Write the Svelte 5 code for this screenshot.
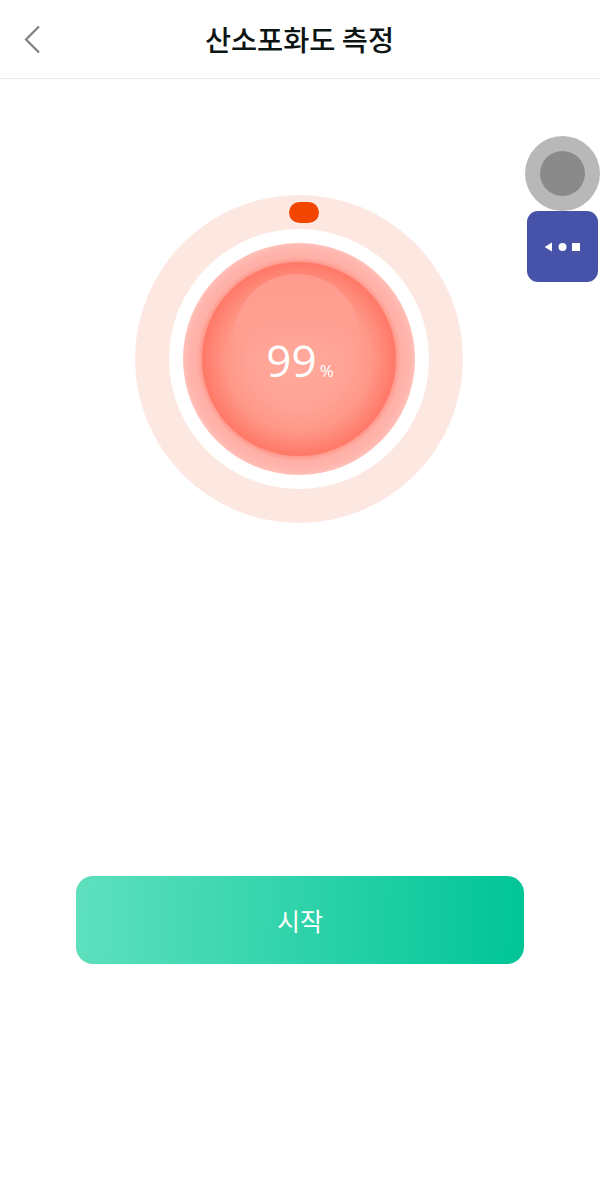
<script>
  let percent = 99
</script>

<div class="page">
  <header>
    <button class="back" aria-label="back">
      <svg width="18" height="30" viewBox="0 0 18 30">
        <path d="M16 1.5 L3 14.5 L16 27.5" fill="none" stroke="#808080" stroke-width="2.2" />
      </svg>
    </button>
    <h1>산소포화도 측정</h1>
  </header>

  <div class="gauge">
    <div class="ring">
      <span class="knob"></span>
      <div class="gap">
        <div class="halo">
          <div class="ball">
            <span class="shine"></span>
            <div class="value">{percent}<small>%</small></div>
          </div>
        </div>
      </div>
    </div>
  </div>

  <button class="start">시작</button>

  <div class="float">
    <div class="assist"><span></span></div>
    <div class="nav">
      <svg width="36" height="10" viewBox="0 0 36 10">
        <path d="M-0.5 5 L7 0.5 V9.5 Z" fill="#fff" />
        <circle cx="17.5" cy="5" r="4" fill="#fff" />
        <rect x="27" y="1" width="8" height="8" fill="#fff" />
      </svg>
    </div>
  </div>
</div>

<style>
  :global(body) {
    margin: 0;
    background: #fff;
  }

  .page {
    position: relative;
    width: 600px;
    height: 1202px;
    overflow: hidden;
    font-family: "Noto Sans CJK KR", "Noto Sans", sans-serif;
  }

  header {
    position: relative;
    height: 78px;
    display: flex;
    align-items: center;
    justify-content: center;
    border-bottom: 1px solid #e8e8e8;
  }

  h1 {
    margin: 0 0 1px -1px;
    font-size: 28.4px;
    font-weight: 500;
    color: #0c1414;
  }

  .back {
    position: absolute;
    left: 23px;
    top: 25px;
    padding: 0;
    border: none;
    background: none;
    line-height: 0;
  }

  .gauge {
    display: flex;
    justify-content: center;
    padding: 116px 2px 0 0;
  }

  .ring {
    position: relative;
    width: 328px;
    height: 328px;
    border-radius: 50%;
    background: #fde8e1;
    display: flex;
    align-items: center;
    justify-content: center;
  }

  .knob {
    position: absolute;
    left: 154px;
    top: 7px;
    width: 30px;
    height: 21px;
    border-radius: 11px;
    background: #f24500;
  }

  .gap {
    width: 260px;
    height: 260px;
    border-radius: 50%;
    background: #fff;
    display: flex;
    align-items: center;
    justify-content: center;
  }

  .halo {
    width: 232px;
    height: 232px;
    border-radius: 50%;
    background: radial-gradient(circle closest-side, #ff9a8e 0, #ff9a8e 84%, #ffb0a7 88%, #ffb4ac 95%, #ffc0b8 100%);
    display: flex;
    align-items: center;
    justify-content: center;
  }

  .ball {
    position: relative;
    width: 194px;
    height: 194px;
    border-radius: 50%;
    background: radial-gradient(circle closest-side, #ffa99c 0, #ffa396 50%, #ff9888 74%, #ff8474 90%, #ff7866 100%);
    display: flex;
    align-items: center;
    justify-content: center;
  }

  .shine {
    position: absolute;
    left: 32px;
    top: 12px;
    width: 126px;
    height: 126px;
    border-radius: 50%;
    background: linear-gradient(180deg, #ff9b8e 0, #ff9f92 35%, rgba(255, 160, 147, 0) 62%);
  }

  .value {
    position: relative;
    top: 1px;
    left: 1px;
    color: #fff;
    font-family: "Open Sans", "Noto Sans", sans-serif;
    font-size: 44px;
    line-height: 1;
  }

  small {
    margin-left: 3px;
    font-size: 17px;
  }

  .start {
    display: block;
    width: 448px;
    height: 88px;
    margin: 353px 0 0 76px;
    padding: 0;
    border: none;
    border-radius: 17px;
    background: linear-gradient(92deg, #5ee0be 0, #3dd7b0 35%, #00c597 100%);
    color: #fff;
    font-family: inherit;
    font-size: 25px;
  }

  .float {
    position: absolute;
    left: 525px;
    top: 136px;
    width: 75px;
    display: flex;
    flex-direction: column;
    align-items: center;
  }

  .assist {
    width: 75px;
    height: 75px;
    border-radius: 50%;
    background: #b8b8b8;
    display: flex;
    align-items: center;
    justify-content: center;
  }

  .assist span {
    width: 45px;
    height: 45px;
    border-radius: 50%;
    background: #8a8a8a;
  }

  .nav {
    width: 71px;
    height: 71px;
    border-radius: 11px;
    background: #4753a8;
    display: flex;
    align-items: center;
    justify-content: center;
  }
</style>
